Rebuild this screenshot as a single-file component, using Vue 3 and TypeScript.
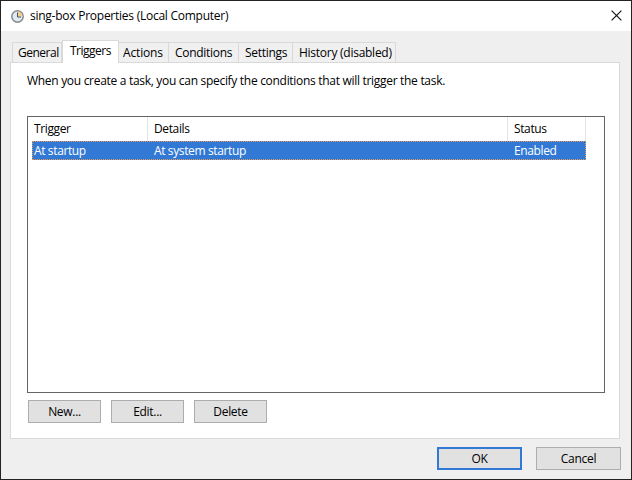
<script setup lang="ts">
interface Trigger {
  trigger: string
  details: string
  status: string
}

const tabs = ['General', 'Triggers', 'Actions', 'Conditions', 'Settings', 'History (disabled)']
const activeTab = 'Triggers'
const triggers: Trigger[] = [
  { trigger: 'At startup', details: 'At system startup', status: 'Enabled' },
]
const actions = ['New...', 'Edit...', 'Delete']
</script>

<template>
  <main class="window">
    <header class="titlebar">
      <svg class="clock" viewBox="0 0 13 13" width="13" height="13">
        <circle cx="6.5" cy="6.5" r="5.7" fill="#dfe9f1" stroke="#8a8a8a" stroke-width="1.5" />
        <path d="M6.5 6.5V1.6A4.9 4.9 0 0 1 11.4 6.5Z" fill="#f3d18a" />
        <path d="M6.5 2.5V7H10" fill="none" stroke="#44566b" stroke-width="1" />
      </svg>
      <h1><span>sing-box Properties (Local Computer)</span></h1>
      <svg class="close" viewBox="0 0 11 11" width="11" height="11">
        <path d="M.6.6 10.4 10.4M10.4.6.6 10.4" stroke="#111" stroke-width="1.15" />
      </svg>
    </header>

    <nav class="tabs">
      <div
        v-for="tab in tabs"
        :key="tab"
        class="tab"
        :class="[tab.split(' ')[0].toLowerCase(), { active: tab === activeTab }]"
      ><span>{{ tab }}</span></div>
    </nav>

    <section class="panel">
      <p><span>When you create a task, you can specify the conditions that will trigger the task.</span></p>
      <div class="list">
        <div class="columns head">
          <div><span>Trigger</span></div>
          <div><span>Details</span></div>
          <div><span>Status</span></div>
        </div>
        <div v-for="item in triggers" :key="item.trigger" class="columns row">
          <div><span>{{ item.trigger }}</span></div>
          <div><span>{{ item.details }}</span></div>
          <div><span>{{ item.status }}</span></div>
        </div>
      </div>
      <div class="commands">
        <button v-for="action in actions" :key="action"><span>{{ action }}</span></button>
      </div>
    </section>

    <footer>
      <button class="primary"><span>OK</span></button>
      <button><span>Cancel</span></button>
    </footer>
  </main>
</template>

<style>
body {
  margin: 0;
  overflow: hidden;
}
</style>

<style scoped>
* {
  box-sizing: border-box;
}
.window {
  width: 632px;
  height: 480px;
  border: 1px solid #242225;
  background: #efefef;
  color: #000;
  font: 12px/16px "Open Sans", "Noto Sans", sans-serif;
  letter-spacing: -0.3px;
  white-space: nowrap;
  display: flex;
  flex-direction: column;
}
.titlebar {
  height: 30px;
  flex: none;
  background: #fff;
  display: flex;
  align-items: center;
  padding: 0 9px 0 10px;
}
h1 {
  margin: 0 auto 0 6px;
  font: inherit;
  letter-spacing: -0.25px;
}
.close {
  margin-top: -2px;
}
.tabs {
  height: 31px;
  flex: none;
  display: flex;
  align-items: flex-end;
  padding-left: 11px;
}
.tab {
  height: 20px;
  border: 1px solid #d9d9d9;
  border-width: 1px 1px 0 0;
  background: #f0f0f0;
  padding: 2px 0 0 6px;
}
.general {
  width: 50px;
  border-left-width: 1px;
  padding-left: 5px;
  letter-spacing: -0.5px;
}
.triggers {
  width: 57px;
  letter-spacing: -0.5px;
}
.tab.actions {
  width: 50px;
  padding-left: 4px;
  letter-spacing: -0.15px;
}
.conditions {
  width: 70px;
}
.settings {
  width: 54px;
}
.history {
  width: 103px;
  letter-spacing: -0.26px;
}
.tab.active {
  height: 23px;
  margin-bottom: -1px;
  border-left-width: 1px;
  background: #fff;
  padding: 2px 0 0 7px;
  position: relative;
}
.panel {
  width: 610px;
  height: 377px;
  flex: none;
  margin-left: 9px;
  border: 1px solid #d9d9d9;
  background: #fff;
  padding: 10px 0 0 16px;
}
p {
  margin: 0;
  height: 43px;
}
.list {
  width: 578px;
  height: 277px;
  border: 1px solid #646464;
  padding-left: 4px;
  letter-spacing: -0.37px;
}
.columns {
  display: grid;
  grid-template-columns: 116px 360px 78px;
  width: 554px;
}
.head {
  height: 24px;
}
.head div {
  border-right: 1px solid #e5e5e5;
  padding: 4px 0 0 6px;
}
.head div:first-child {
  padding-left: 2px;
}
.row {
  height: 19px;
  background: #3179d4;
  border: 1px dotted #e59a5c;
  color: #fff;
}
.row div {
  height: 17px;
  padding: 1px 0 0 5px;
}
.row div:first-child {
  padding-left: 1px;
}
.commands {
  display: flex;
  gap: 10px;
  padding: 7px 0 0 1px;
}
button {
  width: 73px;
  height: 23px;
  border: 1px solid #adadad;
  background: #e1e1e1;
  color: #000;
  font: inherit;
  letter-spacing: inherit;
  padding: 1px 0 0;
}
footer {
  display: flex;
  justify-content: flex-end;
  gap: 14px;
  padding: 8px 10px 0 0;
}
footer button {
  width: 85px;
}
.primary {
  border: 2px solid #3179d4;
}
</style>
